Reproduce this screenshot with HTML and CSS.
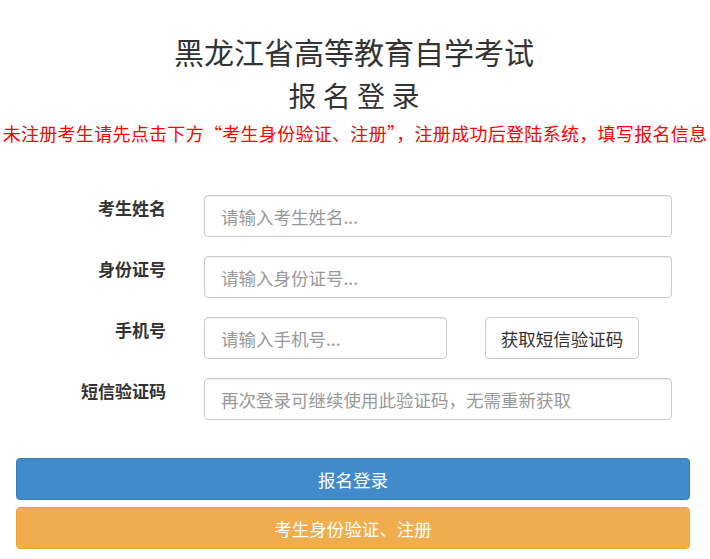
FILE: index.html
```html
<!DOCTYPE html>
<html lang="zh-CN">
<head>
<meta charset="utf-8">
<title>报名登录</title>
<link rel="stylesheet" href="styles.css">
</head>
<body>
<div class="page">
  <div class="header">
    <h1 class="title">黑龙江省高等教育自学考试</h1>
    <h2 class="subtitle">报 名 登 录</h2>
    <p class="notice">未注册考生请先点击下方“考生身份验证、注册”，注册成功后登陆系统，填写报名信息</p>
  </div>
  <form class="form">
    <label class="label">考生姓名</label>
    <input class="input" type="text" placeholder="请输入考生姓名...">
    <label class="label">身份证号</label>
    <input class="input" type="text" placeholder="请输入身份证号...">
    <label class="label">手机号</label>
    <div class="phone-row">
      <input class="input input-phone" type="text" placeholder="请输入手机号...">
      <button type="button" class="btn-code">获取短信验证码</button>
    </div>
    <label class="label">短信验证码</label>
    <input class="input" type="text" placeholder="再次登录可继续使用此验证码，无需重新获取">
  </form>
  <div class="actions">
    <button type="button" class="btn btn-primary">报名登录</button>
    <button type="button" class="btn btn-warning">考生身份验证、注册</button>
  </div>
</div>
</body>
</html>
```
FILE: styles.css
```css
* { box-sizing: border-box; }
html, body {
  margin: 0;
  padding: 0;
  background: #fff;
  font-family: "Noto Sans CJK SC", "Noto Sans", sans-serif;
  color: #333;
}
.page {
  width: 710px;
  padding: 0 20px 0 16px;
}
.header {
  text-align: center;
}
.title {
  margin: 0 -2px 0 0;
  padding-top: 33px;
  font-size: 30px;
  font-weight: normal;
  line-height: 36px;
  color: #333;
}
.subtitle {
  margin: 8px -2px 0 0;
  font-size: 28px;
  font-weight: normal;
  line-height: 36px;
  color: #333;
}
.notice {
  margin: 8px -20px 0 -16px;
  font-size: 18px;
  line-height: 24px;
  letter-spacing: 0.3px;
  color: #ff0000;
  white-space: nowrap;
  text-align: center;
}
.form {
  margin-top: 50px;
  display: grid;
  grid-template-columns: 150px 468px;
  column-gap: 38px;
  row-gap: 19px;
  align-items: start;
}
.label {
  text-align: right;
  font-size: 17px;
  font-weight: bold;
  line-height: 24px;
  padding-top: 1px;
  color: #333;
}
.input {
  display: block;
  width: 100%;
  height: 42px;
  padding: 0 16px;
  border: 1px solid #ccc;
  border-radius: 4px;
  font-family: inherit;
  font-size: 17.5px;
  color: #555;
  box-shadow: inset 0 1px 1px rgba(0,0,0,0.075);
  outline: none;
}
.input::placeholder { color: #999; }
.phone-row {
  display: flex;
  gap: 38px;
}
.input-phone { width: 243px; }
.btn-code {
  width: 154px;
  height: 42px;
  padding: 0;
  background: #fff;
  border: 1px solid #ccc;
  border-radius: 4px;
  font-family: inherit;
  font-size: 17.5px;
  color: #333;
}
.actions {
  margin-top: 38px;
  display: flex;
  flex-direction: column;
  gap: 7px;
}
.btn {
  width: 100%;
  height: 42px;
  border-radius: 4px;
  font-family: inherit;
  font-size: 17.5px;
  color: #fff;
  padding: 0;
}
.btn-primary {
  background: #428bca;
  border: 1px solid #357ebd;
}
.btn-warning {
  background: #f0ad4e;
  border: 1px solid #eea236;
}
```
